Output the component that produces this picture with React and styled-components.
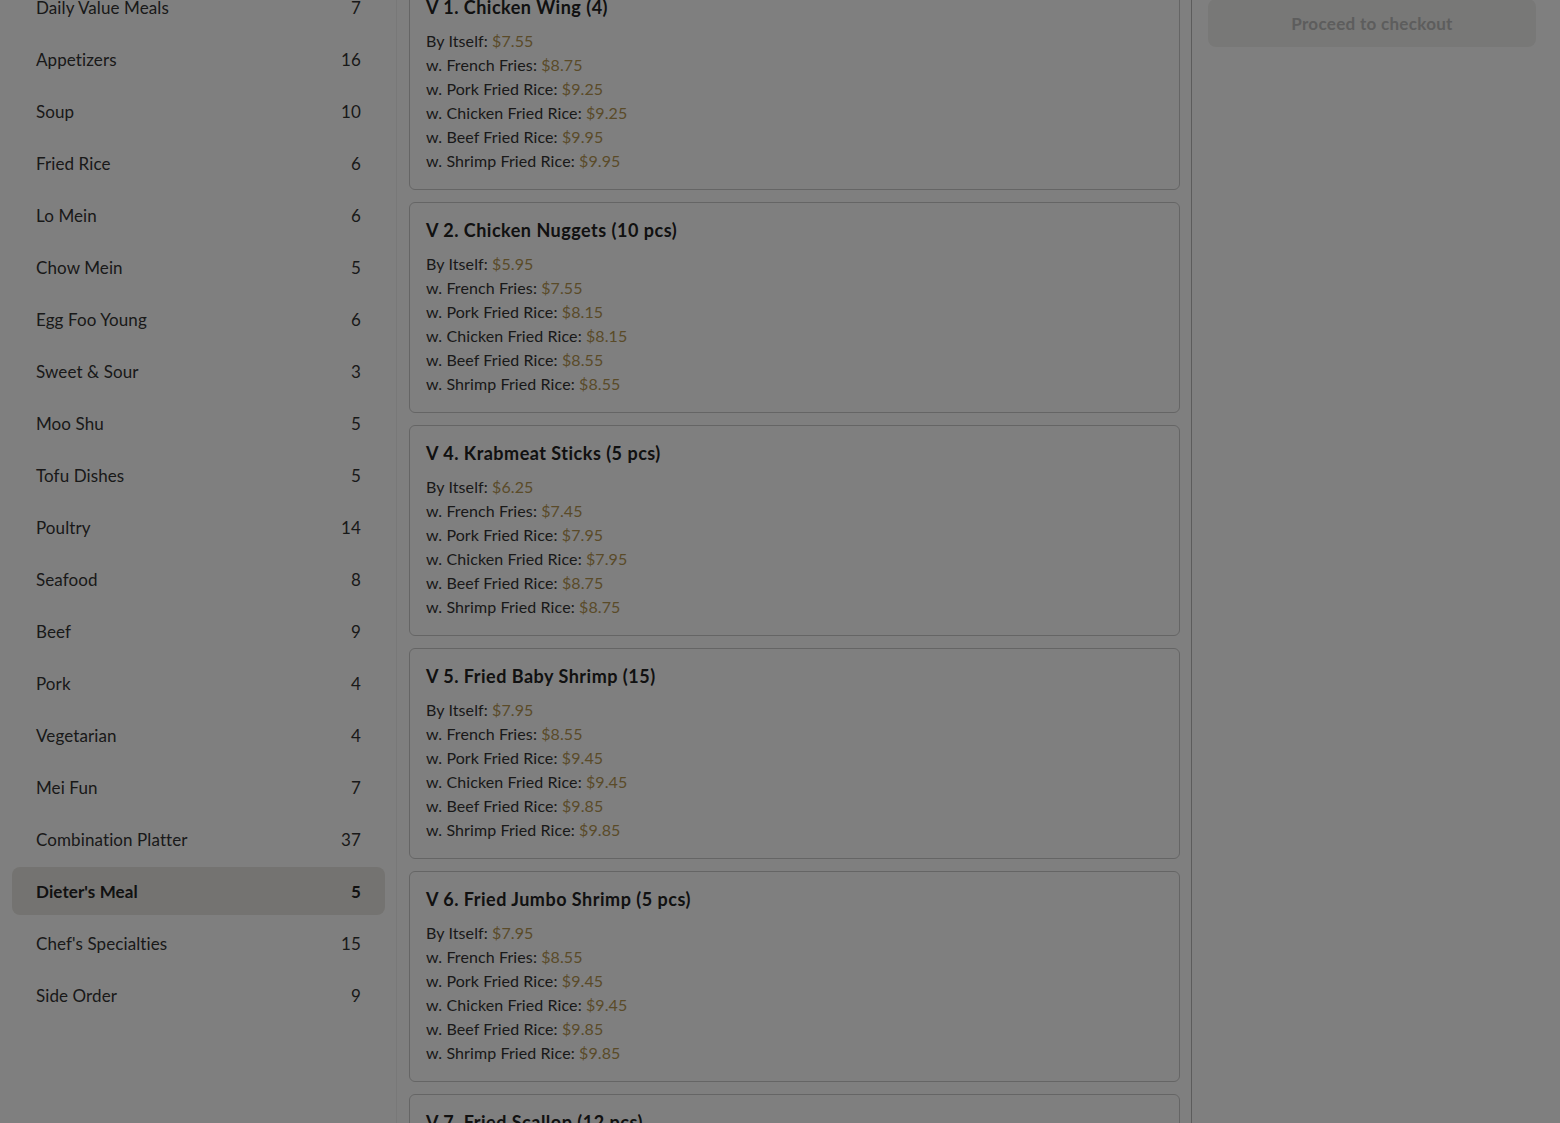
import React from "react";
import styled, { createGlobalStyle } from "styled-components";

const GlobalStyle = createGlobalStyle`
  html, body {
    margin: 0;
    padding: 0;
    background: #ffffff;
    font-family: Lato, "Noto Sans", "Liberation Sans", sans-serif;
    color: #333333;
  }
  * { box-sizing: border-box; }
`;

// the page is shown scrolled a little, under a modal backdrop
const Page = styled.div`
  display: grid;
  grid-template-columns: 397px 1fr 369px;
  margin-top: -29px;
  min-height: 1200px;
`;

const Sidebar = styled.nav`
  display: flex;
  flex-direction: column;
  gap: 4px;
  padding: 12px 11px 12px 12px;
  border-right: 1px solid #f0f0f0;
`;

const Category = styled.div`
  display: flex;
  justify-content: space-between;
  align-items: center;
  height: 48px;
  padding: 0 24px;
  border-radius: 8px;
  font-size: 17px;
  letter-spacing: 0.1px;
  cursor: pointer;
  color: ${(p) => (p.$active ? "#222222" : "#333333")};
  font-weight: ${(p) => (p.$active ? 700 : 400)};
  background: ${(p) => (p.$active ? "#e9e7e2" : "transparent")};
`;

const Menu = styled.main`
  display: flex;
  flex-direction: column;
  gap: 12px;
  padding: 8px 11px 12px 12px;
`;

const Card = styled.section`
  border: 1px solid #cacaca;
  border-radius: 6px;
  padding: 16px;
`;

const Title = styled.h3`
  margin: 0 0 11px;
  font-size: 18px;
  line-height: 22px;
  font-weight: 700;
  letter-spacing: 0.5px;
  color: #222222;
`;

const Option = styled.div`
  font-size: 16px;
  line-height: 24px;
  letter-spacing: 0.1px;
`;

const Price = styled.span`
  color: #b59652;
`;

const Cart = styled.aside`
  border-left: 1px solid #b8b8b8;
  padding: 28px 24px 0 16px;
`;

const Checkout = styled.button`
  width: 100%;
  height: 48px;
  border: none;
  border-radius: 8px;
  background: #f1f1ee;
  color: #bababa;
  font-family: inherit;
  font-size: 17px;
  font-weight: 700;
  letter-spacing: 0.3px;
  cursor: not-allowed;
`;

const Backdrop = styled.div`
  position: fixed;
  inset: 0;
  background: rgba(0, 0, 0, 0.5);
`;

const categories = [
  ["Daily Value Meals", 7],
  ["Appetizers", 16],
  ["Soup", 10],
  ["Fried Rice", 6],
  ["Lo Mein", 6],
  ["Chow Mein", 5],
  ["Egg Foo Young", 6],
  ["Sweet & Sour", 3],
  ["Moo Shu", 5],
  ["Tofu Dishes", 5],
  ["Poultry", 14],
  ["Seafood", 8],
  ["Beef", 9],
  ["Pork", 4],
  ["Vegetarian", 4],
  ["Mei Fun", 7],
  ["Combination Platter", 37],
  ["Dieter's Meal", 5],
  ["Chef's Specialties", 15],
  ["Side Order", 9],
];

const sides = [
  "By Itself",
  "w. French Fries",
  "w. Pork Fried Rice",
  "w. Chicken Fried Rice",
  "w. Beef Fried Rice",
  "w. Shrimp Fried Rice",
];

const items = [
  { name: "V 1. Chicken Wing (4)", prices: ["7.55", "8.75", "9.25", "9.25", "9.95", "9.95"] },
  { name: "V 2. Chicken Nuggets (10 pcs)", prices: ["5.95", "7.55", "8.15", "8.15", "8.55", "8.55"] },
  { name: "V 4. Krabmeat Sticks (5 pcs)", prices: ["6.25", "7.45", "7.95", "7.95", "8.75", "8.75"] },
  { name: "V 5. Fried Baby Shrimp (15)", prices: ["7.95", "8.55", "9.45", "9.45", "9.85", "9.85"] },
  { name: "V 6. Fried Jumbo Shrimp (5 pcs)", prices: ["7.95", "8.55", "9.45", "9.45", "9.85", "9.85"] },
  { name: "V 7. Fried Scallop (12 pcs)", prices: ["8.25", "9.45", "9.95", "9.95", "10.45", "10.45"] },
];

const App = () => {
  return (
    <>
      <GlobalStyle />
      <Page>
        <Sidebar>
          {categories.map(([name, count]) => (
            <Category key={name} $active={name === "Dieter's Meal"}>
              <span>{name}</span>
              <span>{count}</span>
            </Category>
          ))}
        </Sidebar>
        <Menu>
          {items.map((item) => (
            <Card key={item.name}>
              <Title>{item.name}</Title>
              {sides.map((side, i) => (
                <Option key={side}>
                  {side}: <Price>${item.prices[i]}</Price>
                </Option>
              ))}
            </Card>
          ))}
        </Menu>
        <Cart>
          <Checkout disabled>Proceed to checkout</Checkout>
        </Cart>
      </Page>
      <Backdrop />
    </>
  );
};

export default App;
